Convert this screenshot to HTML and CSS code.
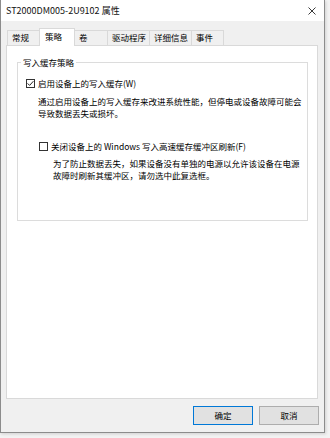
FILE: index.html
```html
<!DOCTYPE html>
<html lang="zh-CN">
<head>
<meta charset="utf-8">
<link rel="stylesheet" href="styles.css">
</head>
<body>
<div class="window">
  <div class="titlebar">
    <span class="title">ST2000DM005-2U9102 属性</span>
    <svg class="close" width="8" height="8" viewBox="0 0 8 8"><path d="M0.5 0.5 L7.5 7.5 M7.5 0.5 L0.5 7.5" stroke="#3a3a3a" stroke-width="1" fill="none"/></svg>
  </div>
  <div class="body">
    <div class="tabs">
      <div class="tab t1">常规</div>
      <div class="tab t2 sel">策略</div>
      <div class="tab t3">卷</div>
      <div class="tab t4">驱动程序</div>
      <div class="tab t5">详细信息</div>
      <div class="tab t6">事件</div>
    </div>
    <div class="panel">
      <fieldset class="group">
        <legend class="legend">写入缓存策略</legend>
        <div class="inner">
          <label class="check">
            <span class="box"><svg width="7" height="7" viewBox="0 0 7 7"><path d="M0.6 3.4 L2.6 5.4 L6.4 1.2" stroke="#222" stroke-width="1" fill="none"/></svg></span>
            <span>启用设备上的写入缓存(W)</span>
          </label>
          <p class="desc d1">通过启用设备上的写入缓存来改进系统性能，但停电或设备故障可能会<br>导致数据丢失或损坏。</p>
          <label class="check c2">
            <span class="box"></span>
            <span>关闭设备上的 Windows 写入高速缓存缓冲区刷新(F)</span>
          </label>
          <p class="desc d2">为了防止数据丢失，如果设备没有单独的电源以允许该设备在电源<br>故障时刷新其缓冲区，请勿选中此复选框。</p>
        </div>
      </fieldset>
    </div>
    <div class="buttons">
      <button class="btn default">确定</button>
      <button class="btn">取消</button>
    </div>
  </div>
</div>
</body>
</html>
```
FILE: styles.css
```css
html, body {
  margin: 0;
  padding: 0;
}
body {
  background: #f3f3f3;
  font-family: "Noto Sans CJK SC", "Noto Sans", sans-serif;
  font-size: 8.5px;
  color: #000;
  width: 330px;
  height: 438px;
  overflow: hidden;
}
.window {
  width: 325px;
  height: 433px;
  box-sizing: border-box;
  border-left: 1px solid #8c8c8c;
  border-right: 1px solid #8c8c8c;
  border-bottom: 1px solid #8c8c8c;
  box-shadow: 1px 1px 3px rgba(0,0,0,0.15);
  display: flex;
  flex-direction: column;
  background: #f0f0f0;
}
.titlebar {
  height: 21px;
  background: #fff;
  display: flex;
  align-items: center;
  justify-content: space-between;
  padding: 0 8px 0 5px;
  flex: none;
}
.title {
  font-size: 9px;
  line-height: 21px;
  color: #111;
}
.close {
  display: block;
  margin-top: 1px;
}
.body {
  flex: 1;
  display: flex;
  flex-direction: column;
  padding: 7px 5px 0 5px;
}
.tabs {
  display: flex;
  align-items: flex-end;
  height: 17px;
  padding-left: 1px;
  position: relative;
  z-index: 1;
}
.tab {
  box-sizing: border-box;
  height: 15px;
  border: 1px solid #d9d9d9;
  border-bottom: none;
  background: #f0f0f0;
  line-height: 13px;
  padding-left: 4px;
  margin-left: -1px;
  white-space: nowrap;
}
.t1 { width: 33px; margin-left: 0; }
.t2 { width: 36px; }
.t3 { width: 34px; }
.t4 { width: 43px; }
.t5 { width: 43px; }
.t6 { width: 33px; }
.tab.sel {
  height: 18px;
  background: #fff;
  margin-bottom: -1px;
  padding-left: 5px;
  line-height: 15px;
  position: relative;
  z-index: 2;
}
.panel {
  width: 312px;
  height: 354px;
  box-sizing: border-box;
  background: #fff;
  border: 1px solid #d9d9d9;
  padding: 10px 0 0 10px;
  flex: none;
}
.group {
  margin: 0;
  width: 291px;
  height: 165px;
  box-sizing: border-box;
  border: 1px solid #dcdcdc;
  padding: 9px 0 0 0;
}
.legend {
  padding: 0 2px;
  margin-left: 3px;
  line-height: 12px;
}
.inner {
  padding-left: 8px;
}
.check {
  display: flex;
  align-items: center;
  height: 12px;
  line-height: 12px;
  white-space: nowrap;
}
.box {
  box-sizing: border-box;
  width: 9px;
  height: 9px;
  border: 1px solid #333;
  background: #fff;
  margin-right: 3px;
  display: flex;
  align-items: center;
  justify-content: center;
}
.box svg { display: block; }
.c2 {
  margin-top: 21px;
  margin-left: 13px;
}
.desc {
  margin: 6px 0 0 12px;
  line-height: 12px;
  white-space: nowrap;
}
.d2 {
  margin-left: 27px;
  line-height: 11.5px;
}
.buttons {
  display: flex;
  justify-content: flex-end;
  gap: 6px;
  margin-top: 7px;
}
.btn {
  box-sizing: border-box;
  width: 60px;
  height: 19px;
  border: 1px solid #adadad;
  background: #e1e1e1;
  font-family: inherit;
  font-size: 8.5px;
  color: #000;
  padding: 0;
  line-height: 17px;
}
.btn.default {
  border-color: #0078d7;
}
```
